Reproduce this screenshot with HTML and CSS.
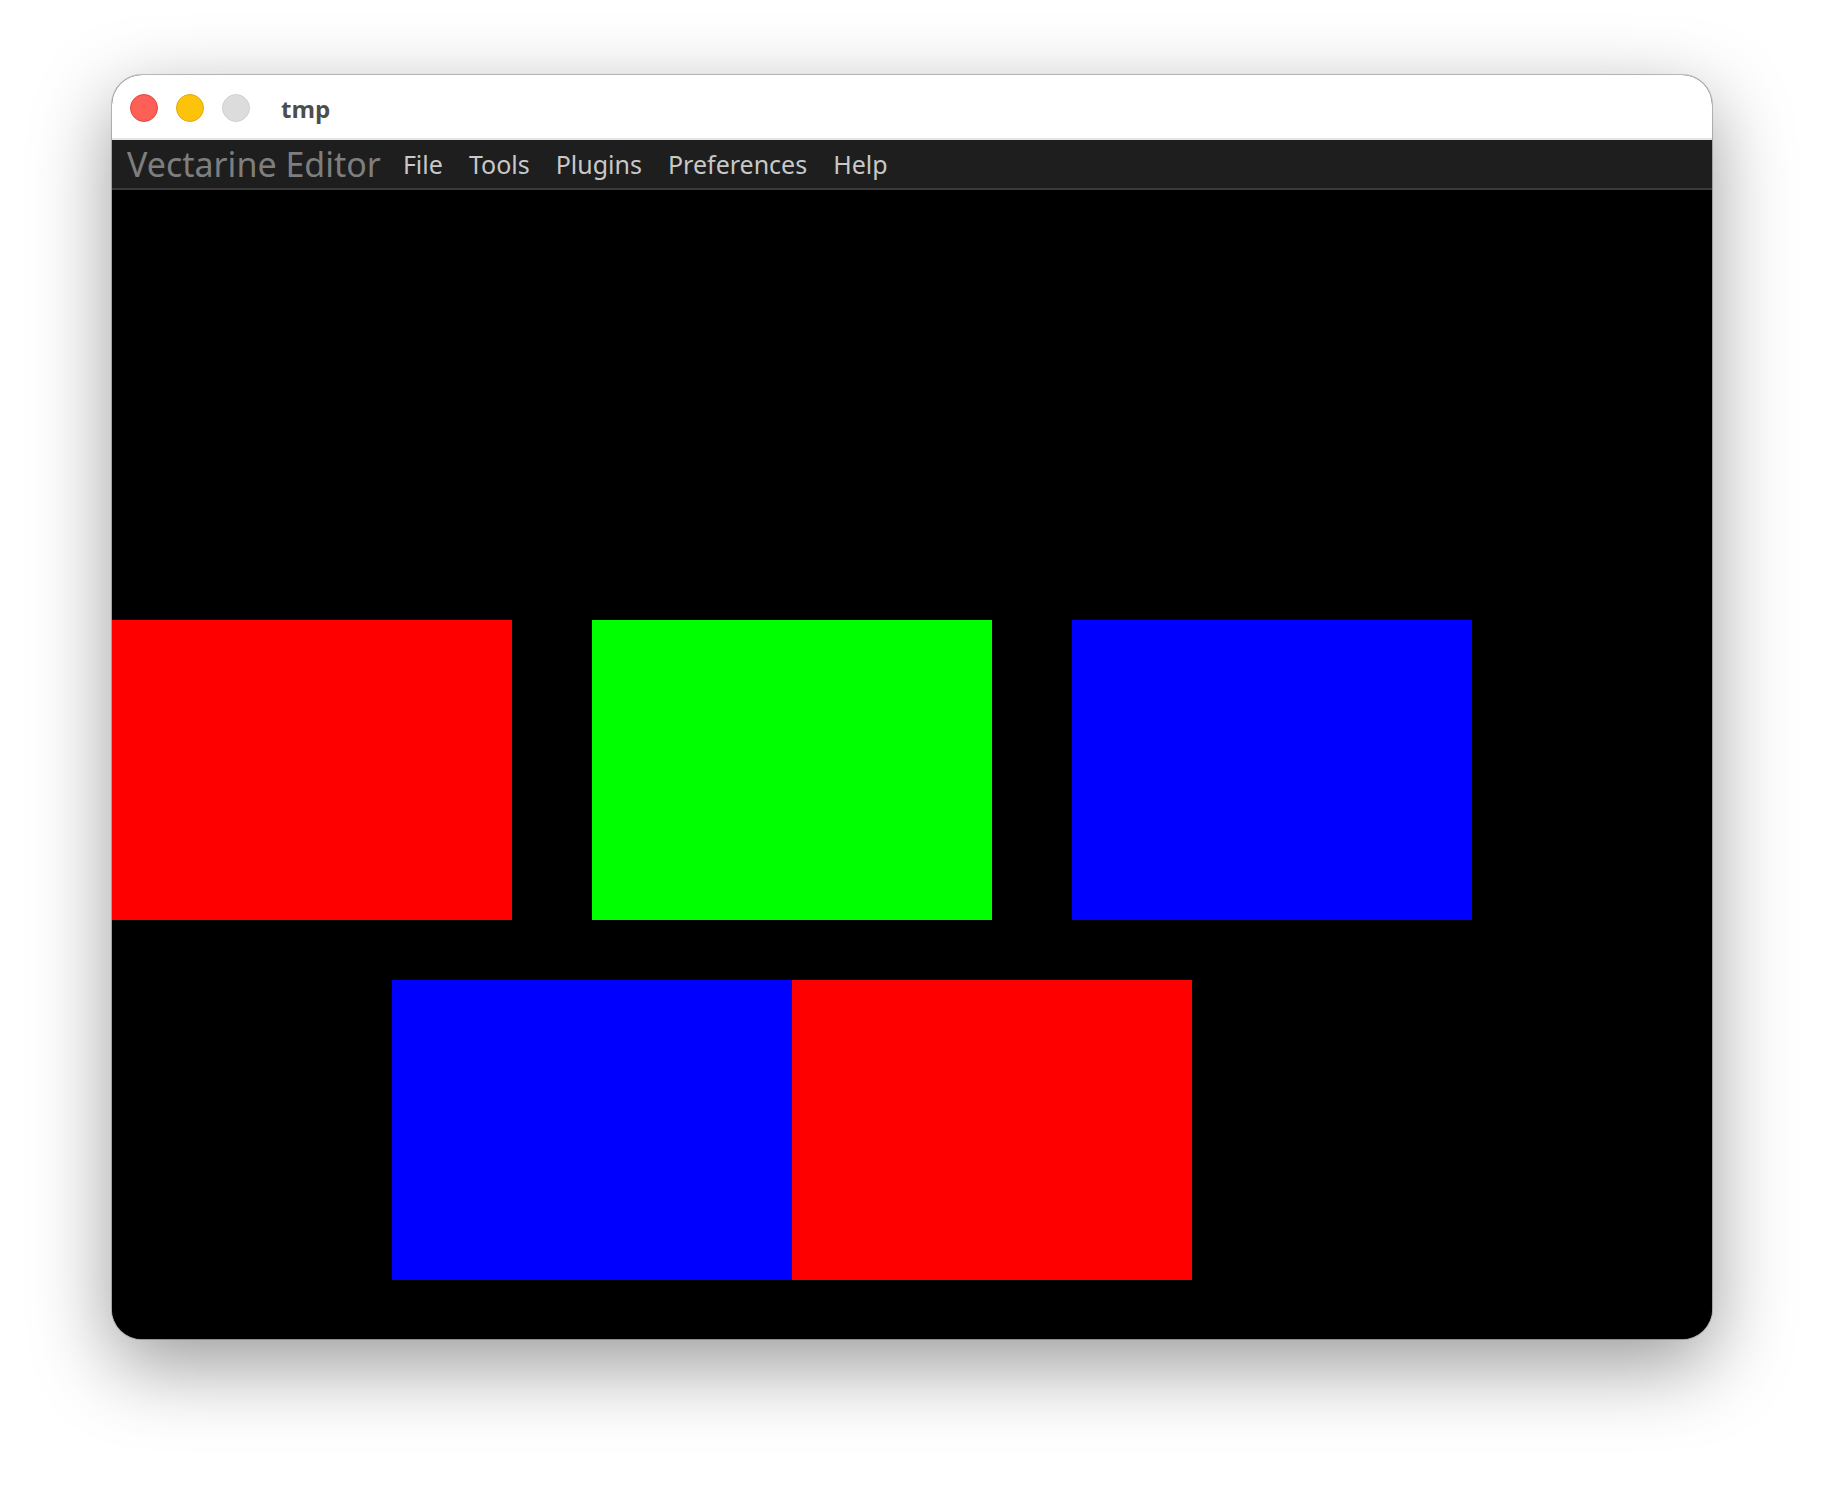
FILE: index.html
```html
<!DOCTYPE html>
<html lang="en">

<head>
    <meta charset="UTF-8">
    <title>tmp</title>
    <link rel="stylesheet" href="styles.css">
</head>

<body>

    <div class="window">
        <div class="titlebar">
            <div class="lights">
                <span class="light close"></span>
                <span class="light minimize"></span>
                <span class="light zoom"></span>
            </div>
            <div class="title">tmp</div>
        </div>

        <div class="menubar">
            <div class="app-name">Vectarine Editor</div>
            <div class="menu-item">File</div>
            <div class="menu-item">Tools</div>
            <div class="menu-item">Plugins</div>
            <div class="menu-item">Preferences</div>
            <div class="menu-item">Help</div>
        </div>

        <div class="canvas">
            <div class="shape-row first">
                <div class="shape red"></div>
                <div class="shape green"></div>
                <div class="shape blue"></div>
            </div>
            <div class="shape-row second">
                <div class="shape blue"></div>
                <div class="shape red"></div>
            </div>
        </div>
    </div>

</body>

</html>
```

FILE: styles.css
```css
html,
body {
    margin: 0;
    min-height: 100%;
}

body {
    background-color: #fff;
    font-family: "Noto Sans", sans-serif;
    padding: 75px 0 149px 112px;
}

/* the macOS window */
.window {
    width: 1600px;
    height: 1264px;
    border-radius: 30px;
    overflow: hidden;
    background-color: #000;
    box-shadow: 0 0 0 1px rgba(0, 0, 0, 0.22), 0 26px 80px rgba(0, 0, 0, 0.4);
    display: flex;
    flex-direction: column;
}

.titlebar {
    height: 63px;
    background-color: #fff;
    border-bottom: 2px solid #e4e4e4;
    display: flex;
    align-items: center;
    padding-left: 18px;
}

.lights {
    display: flex;
    gap: 18px;
    margin-top: 2px;
}

.light {
    width: 28px;
    height: 28px;
    border-radius: 50%;
    box-sizing: border-box;
}

.light.close {
    background-color: #fe5f57;
    border: 1px solid #e2463f;
}

.light.minimize {
    background-color: #fcc30a;
    border: 1px solid #dfa911;
}

.light.zoom {
    background-color: #dcdcdc;
    border: 1px solid #d0d0d0;
}

.title {
    margin-left: 31px;
    font-family: "Open Sans", sans-serif;
    font-weight: 700;
    font-size: 24px;
    color: #4d4d4d;
    padding-top: 3px;
}

/* dark menu bar of the editor */
.menubar {
    height: 48px;
    background-color: #1e1e1e;
    border-bottom: 2px solid #3a3a3a;
    display: flex;
    align-items: center;
    padding-left: 15px;
}

.app-name {
    font-size: 34px;
    color: #7e7e7e;
    margin-right: 22px;
}

.menu-item {
    font-size: 25px;
    color: #c8c8c8;
    margin-right: 26px;
}

.canvas {
    flex: 1;
    background-color: #000;
}

.shape-row {
    display: flex;
    gap: 80px;
}

.shape-row.first {
    margin-top: 430px;
}

.shape-row.second {
    margin-top: 60px;
    margin-left: 280px;
    gap: 0;
}

.shape {
    width: 400px;
    height: 300px;
}

.red {
    background-color: #ff0000;
}

.green {
    background-color: #00ff00;
}

.blue {
    background-color: #0000ff;
}
```
